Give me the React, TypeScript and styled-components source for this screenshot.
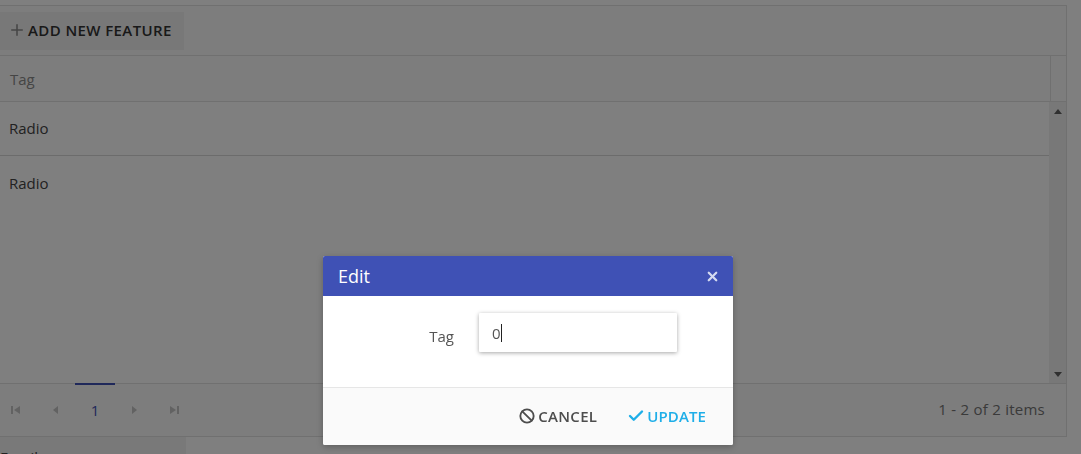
import React from "react"
import styled, { createGlobalStyle } from "styled-components"
import { Ban, Check, Plus, X } from "lucide-react"

const GlobalStyle = createGlobalStyle`
  html, body {
    margin: 0;
    height: 100%;
    overflow: hidden;
    background: #fff;
    font-family: "Open Sans", "Liberation Sans", sans-serif;
  }
`

const Page = styled.div`
  width: 1081px;
  height: 454px;
  overflow: hidden;
  padding-top: 5px;
  box-sizing: border-box;
`

const Grid = styled.div`
  height: 432px;
  width: 1068px;
  margin-left: -1px;
  box-sizing: border-box;
  border: 1px solid #e0e0e0;
  display: flex;
  flex-direction: column;
`

const Toolbar = styled.div`
  height: 50px;
  flex: none;
  padding-top: 6px;
  box-sizing: border-box;
  border-bottom: 1px solid #e0e0e0;
  background: #fafafa;
`

const ToolButton = styled.div`
  height: 38px;
  width: 184px;
  display: flex;
  align-items: center;
  gap: 2px;
  padding: 0 0 3px 8px;
  box-sizing: border-box;
  background: #f0f0f0;
  color: #333;
  font-size: 15px;
  font-weight: 600;
  letter-spacing: 0.4px;
  svg {
    color: #8a8a8a;
  }
`

const HeaderRow = styled.div`
  height: 46px;
  flex: none;
  display: flex;
  background: #fafafa;
  border-bottom: 1px solid #e0e0e0;
  box-sizing: border-box;
`

const HeaderCell = styled.div`
  flex: 1;
  display: flex;
  align-items: center;
  padding-left: 10px;
  font-size: 15px;
  color: #8a8a8a;
  border-right: 1px solid #e0e0e0;
`

const HeaderGap = styled.div`
  width: 15px;
  flex: none;
`

const Content = styled.div`
  flex: 1;
  min-height: 0;
  display: flex;
`

const Rows = styled.div`
  flex: 1;
`

const Row = styled.div<{ $last?: boolean }>`
  height: 54px;
  display: flex;
  align-items: center;
  padding-left: 9px;
  padding-bottom: 1px;
  box-sizing: border-box;
  font-size: 15px;
  color: #444;
  background: #fff;
  border-bottom: ${(p) => (p.$last ? "none" : "1px solid #d8d8d8")};
`

const Scrollbar = styled.div`
  width: 17px;
  flex: none;
  background: #f1f1f1;
  display: flex;
  flex-direction: column;
  justify-content: space-between;
  align-items: center;
  padding: 7px 0 6px;
  box-sizing: border-box;
`

const Pager = styled.div`
  height: 53px;
  flex: none;
  display: flex;
  align-items: center;
  border-top: 1px solid #e0e0e0;
  background: #fafafa;
  box-sizing: border-box;
  padding-left: 10px;
  padding-right: 21px;
  color: #9e9e9e;
`

const PagerIcon = styled.svg`
  width: 11px;
  height: 10px;
  flex: none;
  margin-right: 29px;
  fill: #c4c4c4;
`

const PageNumber = styled.div`
  width: 40px;
  height: 53px;
  margin: -1px 14px 0 -15px;
  flex: none;
  display: flex;
  align-items: center;
  justify-content: center;
  border-top: 2px solid #3f51b5;
  box-sizing: border-box;
  color: #3f51b5;
  font-size: 15px;
  padding-bottom: 1px;
`

const ItemCount = styled.div`
  margin-left: auto;
  font-size: 15px;
  letter-spacing: 0.25px;
  color: #757575;
  padding-bottom: 2px;
`

const NextSection = styled.div`
  width: 186px;
  height: 40px;
  padding-top: 10px;
  box-sizing: border-box;
  background: #f2f2f2;
  color: #444;
  font-size: 15px;
`

const Overlay = styled.div`
  position: fixed;
  inset: 0;
  background: rgba(0, 0, 0, 0.5);
`

const Dialog = styled.div`
  position: absolute;
  left: 323px;
  top: 256px;
  width: 410px;
  height: 189px;
  display: flex;
  flex-direction: column;
  border-radius: 2px;
  overflow: hidden;
  background: #fff;
  box-shadow: 0 2px 6px rgba(0, 0, 0, 0.25);
`

const DialogHeader = styled.div`
  height: 40px;
  flex: none;
  display: flex;
  align-items: center;
  justify-content: space-between;
  padding: 0 13px 0 15px;
  background: #3f51b5;
  color: #fff;
  font-size: 18px;
  svg {
    color: #d5daf0;
  }
`

const DialogBody = styled.div`
  flex: 1;
  display: flex;
  align-items: flex-start;
  padding-top: 17px;
  box-sizing: border-box;
`

const FieldLabel = styled.label`
  width: 131px;
  flex: none;
  text-align: right;
  font-size: 15px;
  color: #555;
  padding-top: 13px;
`

const FieldInput = styled.div`
  width: 198px;
  height: 39px;
  margin-left: 25px;
  display: flex;
  align-items: center;
  padding-left: 13px;
  box-sizing: border-box;
  background: #fff;
  border-radius: 1px;
  box-shadow: 0 1px 4px rgba(0, 0, 0, 0.35);
  font-size: 15px;
  color: #555;
`

const Caret = styled.span`
  width: 1px;
  height: 18px;
  background: #222;
`

const DialogFooter = styled.div`
  height: 58px;
  flex: none;
  display: flex;
  align-items: center;
  justify-content: flex-end;
  gap: 30px;
  padding: 0 27px 2px 0;
  box-sizing: border-box;
  background: #fafafa;
  border-top: 1px solid #e6e6e6;
`

const FooterButton = styled.div<{ $primary?: boolean }>`
  display: flex;
  align-items: center;
  gap: ${(p) => (p.$primary ? "2px" : "3px")};
  font-size: 15px;
  font-weight: 600;
  letter-spacing: ${(p) => (p.$primary ? "0.1px" : "0.3px")};
  color: ${(p) => (p.$primary ? "#1eaee8" : "#4d4d4d")};
`

const First = () => (
  <PagerIcon viewBox="0 0 11 10">
    <path d="M1 1h2v8H1zM10 1v8L4 5z" />
  </PagerIcon>
)
const Prev = () => (
  <PagerIcon viewBox="0 0 11 10">
    <path d="M8 1v8L3 5z" />
  </PagerIcon>
)
const Next = () => (
  <PagerIcon viewBox="0 0 11 10">
    <path d="M3 1v8l5-4z" />
  </PagerIcon>
)
const Last = () => (
  <PagerIcon viewBox="0 0 11 10">
    <path d="M8 1h2v8H8zM1 1v8l6-4z" />
  </PagerIcon>
)

export default function App() {
  return (
    <>
      <GlobalStyle />
      <Page>
        <Grid>
          <Toolbar>
            <ToolButton>
              <Plus size={18} strokeWidth={2} />
              ADD NEW FEATURE
            </ToolButton>
          </Toolbar>
          <HeaderRow>
            <HeaderCell>Tag</HeaderCell>
            <HeaderGap />
          </HeaderRow>
          <Content>
            <Rows>
              <Row>Radio</Row>
              <Row $last>Radio</Row>
            </Rows>
            <Scrollbar>
              <svg width="8" height="5" viewBox="0 0 8 5">
                <path d="M4 0l4 5H0z" fill="#606060" />
              </svg>
              <svg width="8" height="5" viewBox="0 0 8 5">
                <path d="M0 0h8L4 5z" fill="#606060" />
              </svg>
            </Scrollbar>
          </Content>
          <Pager>
            <First />
            <Prev />
            <PageNumber>1</PageNumber>
            <Next />
            <Last />
            <ItemCount>1 - 2 of 2 items</ItemCount>
          </Pager>
        </Grid>
        <NextSection>Email</NextSection>
      </Page>
      <Overlay />
      <Dialog>
        <DialogHeader>
          Edit
          <X size={15} strokeWidth={3.6} />
        </DialogHeader>
        <DialogBody>
          <FieldLabel>Tag</FieldLabel>
          <FieldInput>
            0<Caret />
          </FieldInput>
        </DialogBody>
        <DialogFooter>
          <FooterButton>
            <Ban size={16} strokeWidth={2.8} />
            CANCEL
          </FooterButton>
          <FooterButton $primary>
            <Check size={18} strokeWidth={3.2} />
            UPDATE
          </FooterButton>
        </DialogFooter>
      </Dialog>
    </>
  )
}
